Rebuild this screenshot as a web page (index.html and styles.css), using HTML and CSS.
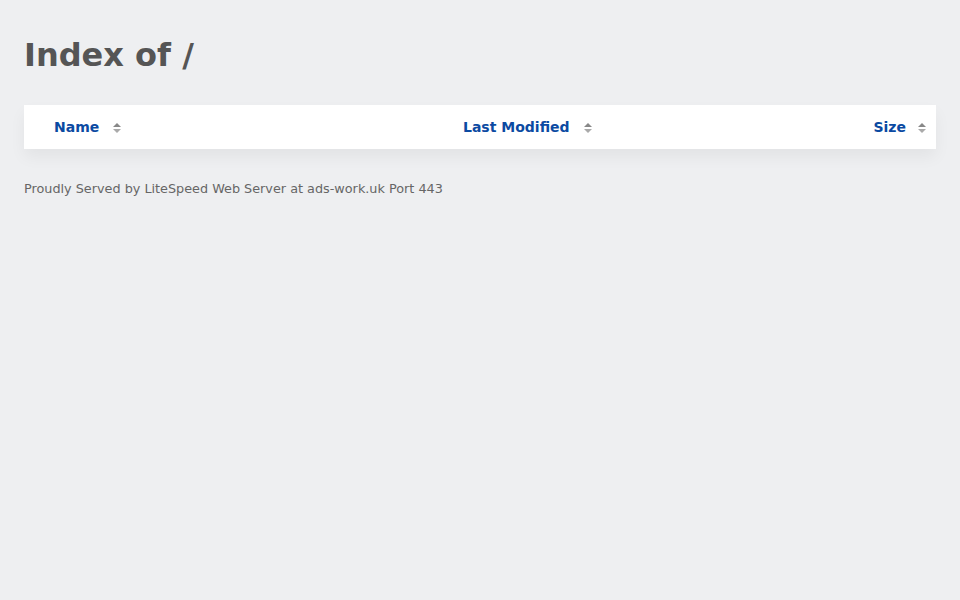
FILE: index.html
```html
<!DOCTYPE html>
<html lang="en">
<head>
    <meta charset="UTF-8">
    <title>Index of /</title>
    <link rel="stylesheet" href="styles.css">
</head>
<body>
    <h1>Index of /</h1>
    <table class="listing">
        <thead>
            <tr>
                <th class="col-icon"></th>
                <th class="col-name"><a href="?C=N&amp;O=A">Name</a><span class="sort"></span></th>
                <th class="col-date"><a href="?C=M&amp;O=A">Last Modified</a><span class="sort"></span></th>
                <th class="col-size"><a href="?C=S&amp;O=A">Size</a><span class="sort"></span></th>
            </tr>
        </thead>
        <tbody></tbody>
    </table>
    <address>Proudly Served by LiteSpeed Web Server at ads-work.uk Port 443</address>
</body>
</html>
```

FILE: styles.css
```css
html, body {
    margin: 0;
    padding: 0;
}
body {
    background-color: #eeeff1;
    padding: 24px;
    font-family: 'DejaVu Sans', sans-serif;
    color: #555;
}
h1 {
    margin: 12px 0 31px;
    font-size: 32px;
    font-weight: bold;
    color: #555;
}
.listing {
    width: 100%;
    border-collapse: collapse;
    background-color: #fff;
    box-shadow: 0 8px 16px rgba(0, 0, 0, 0.05);
}
.listing th {
    height: 44px;
    padding: 0;
    font-size: 14px;
    font-weight: bold;
    text-align: left;
    white-space: nowrap;
}
.listing th a {
    color: #0b4aa2;
    text-decoration: none;
}
.col-icon {
    width: 30px;
}
.col-name {
    width: 409px;
}
.col-size {
    text-align: right !important;
    padding-right: 10px !important;
}
.sort {
    display: inline-block;
    position: relative;
    width: 8px;
    height: 10px;
    margin-left: 14px;
    vertical-align: -1px;
}
.col-size .sort {
    margin-left: 12px;
}
.sort::before,
.sort::after {
    content: "";
    position: absolute;
    left: 0;
    border-left: 4px solid transparent;
    border-right: 4px solid transparent;
}
.sort::before {
    top: 0;
    border-bottom: 4px solid #888;
}
.sort::after {
    bottom: 0;
    border-top: 4px solid #aaa;
}
address {
    margin-top: 32px;
    font-size: 12.8px;
    font-style: normal;
    color: #666;
}
```
